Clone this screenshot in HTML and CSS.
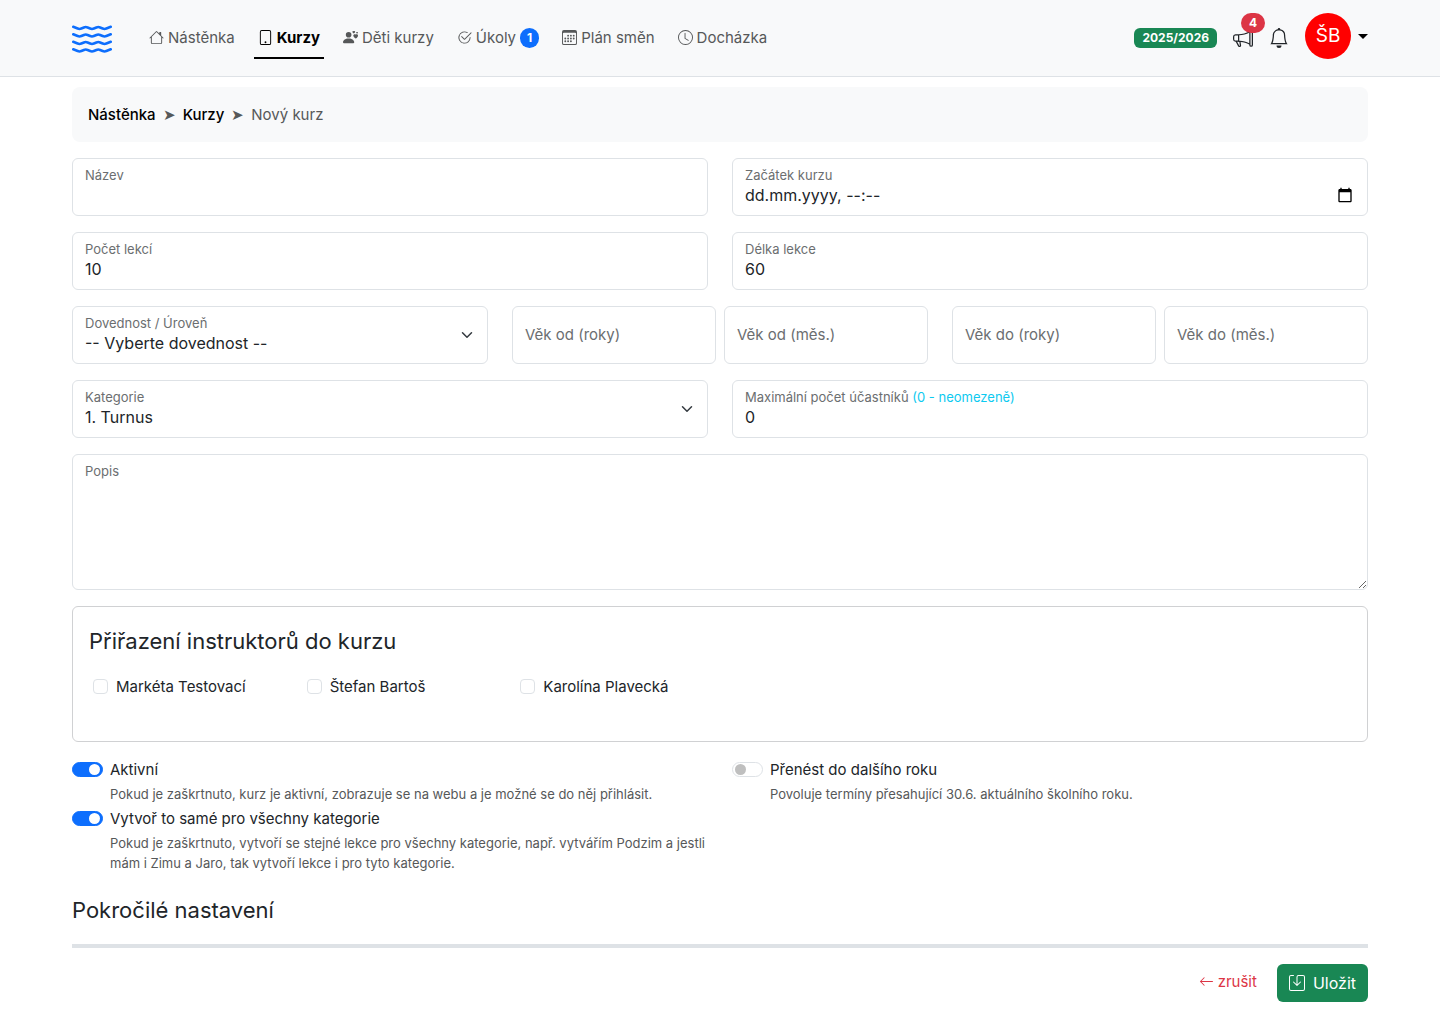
FILE: index.html
```html
<!DOCTYPE html>
<html lang="cs">
<head>
    <meta charset="UTF-8">
    <meta name="viewport" content="width=device-width, initial-scale=1.0">
    <title>Nový kurz</title>
    <link rel="stylesheet" href="styles.css">
</head>
<body>
    <header class="site-header">
        <div class="container header-inner">
            <a class="logo" href="#" aria-label="Domů">
                <svg viewBox="0 0 16 16" width="40" height="40">
                    <defs>
                        <path id="wave" d="M.036 3.314a.5.5 0 0 1 .65-.278l1.757.703a1.5 1.5 0 0 0 1.114 0l1.014-.406a2.5 2.5 0 0 1 1.857 0l1.015.406a1.5 1.5 0 0 0 1.114 0l1.014-.406a2.5 2.5 0 0 1 1.857 0l1.015.406a1.5 1.5 0 0 0 1.114 0l1.757-.703a.5.5 0 1 1 .372.928l-1.758.703a2.5 2.5 0 0 1-1.857 0l-1.014-.406a1.5 1.5 0 0 0-1.114 0l-1.015.406a2.5 2.5 0 0 1-1.857 0l-1.014-.406a1.5 1.5 0 0 0-1.114 0l-1.015.406a2.5 2.5 0 0 1-1.857 0L.314 3.964a.5.5 0 0 1-.278-.65"/>
                    </defs>
                    <use href="#wave"/>
                    <use href="#wave" y="3"/>
                    <use href="#wave" y="6"/>
                    <use href="#wave" y="9"/>
                </svg>
            </a>

            <nav class="main-nav">
                <a href="#">
                    <svg class="icon" viewBox="0 0 16 16"><path d="M8.707 1.5a1 1 0 0 0-1.414 0L.646 8.146a.5.5 0 0 0 .708.708L2 8.207V13.5A1.5 1.5 0 0 0 3.5 15h9a1.5 1.5 0 0 0 1.5-1.5V8.207l.646.647a.5.5 0 0 0 .708-.708L13 5.793V2.5a.5.5 0 0 0-.5-.5h-1a.5.5 0 0 0-.5.5v1.293zM13 7.207V13.5a.5.5 0 0 1-.5.5h-9a.5.5 0 0 1-.5-.5V7.207l5-5z"/></svg>
                    Nástěnka
                </a>
                <a href="#" class="active">
                    <svg class="icon" viewBox="0 0 16 16"><path d="M12 1a1 1 0 0 1 1 1v12a1 1 0 0 1-1 1H4a1 1 0 0 1-1-1V2a1 1 0 0 1 1-1zM4 0a2 2 0 0 0-2 2v12a2 2 0 0 0 2 2h8a2 2 0 0 0 2-2V2a2 2 0 0 0-2-2z"/><path d="M8 14a1 1 0 1 0 0-2 1 1 0 0 0 0 2"/></svg>
                    Kurzy
                </a>
                <a href="#">
                    <svg class="icon" viewBox="0 0 16 16"><path d="M11.5 1.246c.832-.855 2.913.642 0 2.566-2.913-1.924-.832-3.421 0-2.566M9 5a3 3 0 1 1-6 0 3 3 0 0 1 6 0m-9 8c0 1 1 1 1 1h10s1 0 1-1-1-4-6-4-6 3-6 4m13.5-8.09c1.387-1.425 4.855 1.07 0 4.277-4.854-3.207-1.387-5.702 0-4.276ZM15 2.165c.555-.57 1.942.428 0 1.711-1.942-1.283-.555-2.281 0-1.71Z"/></svg>
                    Děti kurzy
                </a>
                <a href="#">
                    <svg class="icon" viewBox="0 0 16 16"><path d="M2.5 8a5.5 5.5 0 0 1 8.25-4.764.5.5 0 0 0 .5-.866A6.5 6.5 0 1 0 14.5 8a.5.5 0 0 0-1 0 5.5 5.5 0 1 1-11 0"/><path d="M15.354 3.354a.5.5 0 0 0-.708-.708L8 9.293 5.354 6.646a.5.5 0 1 0-.708.708l3 3a.5.5 0 0 0 .708 0z"/></svg>
                    Úkoly
                    <span class="badge badge-blue">1</span>
                </a>
                <a href="#">
                    <svg class="icon" viewBox="0 0 16 16"><path d="M14 0H2a2 2 0 0 0-2 2v12a2 2 0 0 0 2 2h12a2 2 0 0 0 2-2V2a2 2 0 0 0-2-2M1 3.857C1 3.384 1.448 3 2 3h12c.552 0 1 .384 1 .857v10.286c0 .473-.448.857-1 .857H2c-.552 0-1-.384-1-.857z"/><path d="M6.5 7a1 1 0 1 0 0-2 1 1 0 0 0 0 2m3 0a1 1 0 1 0 0-2 1 1 0 0 0 0 2m3 0a1 1 0 1 0 0-2 1 1 0 0 0 0 2m-9 3a1 1 0 1 0 0-2 1 1 0 0 0 0 2m3 0a1 1 0 1 0 0-2 1 1 0 0 0 0 2m3 0a1 1 0 1 0 0-2 1 1 0 0 0 0 2m3 0a1 1 0 1 0 0-2 1 1 0 0 0 0 2m-9 3a1 1 0 1 0 0-2 1 1 0 0 0 0 2m3 0a1 1 0 1 0 0-2 1 1 0 0 0 0 2m3 0a1 1 0 1 0 0-2 1 1 0 0 0 0 2"/></svg>
                    Plán směn
                </a>
                <a href="#">
                    <svg class="icon" viewBox="0 0 16 16"><path d="M8 3.5a.5.5 0 0 0-1 0V9a.5.5 0 0 0 .252.434l3.5 2a.5.5 0 0 0 .496-.868L8 8.71z"/><path d="M8 16A8 8 0 1 0 8 0a8 8 0 0 0 0 16m7-8A7 7 0 1 1 1 8a7 7 0 0 1 14 0"/></svg>
                    Docházka
                </a>
            </nav>

            <div class="header-tools">
                <span class="badge badge-green">2025/2026</span>
                <a class="tool" href="#" aria-label="Oznámení">
                    <svg viewBox="0 0 16 16" width="20" height="20"><path d="M13 2.5a1.5 1.5 0 0 1 3 0v11a1.5 1.5 0 0 1-3 0v-.214c-2.162-1.241-4.49-1.843-6.912-2.083l.405 2.712A1 1 0 0 1 5.51 15.1h-.548a1 1 0 0 1-.916-.599l-1.85-3.49-.202-.003A2.014 2.014 0 0 1 0 9V7a2.02 2.02 0 0 1 1.992-2.013 75 75 0 0 0 2.483-.075c3.043-.154 6.148-.849 8.525-2.199zm1 0v11a.5.5 0 0 0 1 0v-11a.5.5 0 0 0-1 0m-1 1.35c-2.344 1.205-5.209 1.842-8 2.033v4.233q.27.015.537.036c2.568.189 5.093.744 7.463 1.993zm-9 6.215v-4.13a95 95 0 0 1-1.992.052A1.02 1.02 0 0 0 1 7v2c0 .55.448 1.002 1.006 1.009A61 61 0 0 1 4 10.065m-.657.975 1.609 3.037.01.024h.548l-.002-.014-.443-2.966a68 68 0 0 0-1.722-.082z"/></svg>
                    <span class="badge badge-red">4</span>
                </a>
                <a class="tool" href="#" aria-label="Upozornění">
                    <svg viewBox="0 0 16 16" width="20" height="20"><path d="M8 16a2 2 0 0 0 2-2H6a2 2 0 0 0 2 2M8 1.918l-.797.161A4 4 0 0 0 4 6c0 .628-.134 2.197-.459 3.742-.16.767-.376 1.566-.663 2.258h10.244c-.287-.692-.502-1.49-.663-2.258C12.134 8.197 12 6.628 12 6a4 4 0 0 0-3.203-3.92zM14.22 12c.223.447.481.801.78 1H1c.299-.199.557-.553.78-1C2.68 10.2 3 6.88 3 6c0-2.42 1.72-4.44 4.005-4.901a1 1 0 1 1 1.99 0A5 5 0 0 1 13 6c0 .88.32 4.2 1.22 6"/></svg>
                </a>
                <button type="button" class="user-menu">
                    <span class="avatar">ŠB</span>
                    <span class="caret"></span>
                </button>
            </div>
        </div>
    </header>

    <main class="container">
        <nav class="breadcrumb" aria-label="Drobečková navigace">
            <a href="#">Nástěnka</a>
            <span class="separator">➤</span>
            <a href="#">Kurzy</a>
            <span class="separator">➤</span>
            <span>Nový kurz</span>
        </nav>

        <form>
            <div class="row">
                <div class="field">
                    <input type="text" id="name">
                    <label for="name">Název</label>
                </div>
                <div class="field">
                    <input type="text" id="start" value="dd.mm.yyyy, --:--">
                    <label for="start">Začátek kurzu</label>
                    <svg class="calendar" viewBox="0 0 24 24"><path d="M20 3h-1V1h-2v2H7V1H5v2H4c-1.1 0-2 .9-2 2v16c0 1.1.9 2 2 2h16c1.1 0 2-.9 2-2V5c0-1.1-.9-2-2-2zm0 18H4V8h16z"/></svg>
                </div>
            </div>

            <div class="row">
                <div class="field">
                    <input type="text" inputmode="numeric" id="lessons" value="10">
                    <label for="lessons">Počet lekcí</label>
                </div>
                <div class="field">
                    <input type="text" inputmode="numeric" id="length" value="60">
                    <label for="length">Délka lekce</label>
                </div>
            </div>

            <div class="row row-thirds">
                <div class="field">
                    <select id="skill">
                        <option>-- Vyberte dovednost --</option>
                    </select>
                    <label for="skill">Dovednost / Úroveň</label>
                    <svg class="chevron" viewBox="0 0 16 16"><path d="m2 5 6 6 6-6"/></svg>
                </div>
                <div class="age">
                    <div class="field">
                        <input type="text" inputmode="numeric" id="from-years" placeholder=" ">
                        <label for="from-years">Věk od (roky)</label>
                    </div>
                    <div class="field">
                        <input type="text" inputmode="numeric" id="from-months" placeholder=" ">
                        <label for="from-months">Věk od (měs.)</label>
                    </div>
                </div>
                <div class="age">
                    <div class="field">
                        <input type="text" inputmode="numeric" id="to-years" placeholder=" ">
                        <label for="to-years">Věk do (roky)</label>
                    </div>
                    <div class="field">
                        <input type="text" inputmode="numeric" id="to-months" placeholder=" ">
                        <label for="to-months">Věk do (měs.)</label>
                    </div>
                </div>
            </div>

            <div class="row">
                <div class="field">
                    <select id="category">
                        <option>1. Turnus</option>
                    </select>
                    <label for="category">Kategorie</label>
                    <svg class="chevron" viewBox="0 0 16 16"><path d="m2 5 6 6 6-6"/></svg>
                </div>
                <div class="field">
                    <input type="text" inputmode="numeric" id="capacity" value="0">
                    <label for="capacity">Maximální počet účastníků <span class="hint">(0 - neomezeně)</span></label>
                </div>
            </div>

            <div class="field">
                <textarea id="description"></textarea>
                <label for="description">Popis</label>
            </div>

            <section class="panel">
                <h2>Přiřazení instruktorů do kurzu</h2>
                <div class="instructors">
                    <label><input type="checkbox"> Markéta Testovací</label>
                    <label><input type="checkbox"> Štefan Bartoš</label>
                    <label><input type="checkbox"> Karolína Plavecká</label>
                </div>
            </section>

            <div class="row">
                <div>
                    <div class="switch">
                        <input type="checkbox" id="active" checked>
                        <label for="active">Aktivní</label>
                        <p>Pokud je zaškrtnuto, kurz je aktivní, zobrazuje se na webu a je možné se do něj přihlásit.</p>
                    </div>
                    <div class="switch">
                        <input type="checkbox" id="all-categories" checked>
                        <label for="all-categories">Vytvoř to samé pro všechny kategorie</label>
                        <p>Pokud je zaškrtnuto, vytvoří se stejné lekce pro všechny kategorie, např. vytvářím Podzim a jestli mám i Zimu a Jaro, tak vytvoří lekce i pro tyto kategorie.</p>
                    </div>
                </div>
                <div class="switch">
                    <input type="checkbox" id="next-year">
                    <label for="next-year">Přenést do dalšího roku</label>
                    <p>Povoluje termíny přesahující 30.6. aktuálního školního roku.</p>
                </div>
            </div>

            <h2 class="advanced">Pokročilé nastavení</h2>

            <div class="actions">
                <a class="cancel" href="#">
                    <svg class="icon" viewBox="0 0 16 16"><path d="M15 8a.5.5 0 0 0-.5-.5H2.707l3.147-3.146a.5.5 0 1 0-.708-.708l-4 4a.5.5 0 0 0 0 .708l4 4a.5.5 0 0 0 .708-.708L2.707 8.5H14.5A.5.5 0 0 0 15 8"/></svg>
                    zrušit
                </a>
                <button type="submit" class="save">
                    <svg viewBox="0 0 16 16" width="16" height="16"><path d="M2 1a1 1 0 0 0-1 1v12a1 1 0 0 0 1 1h12a1 1 0 0 0 1-1V2a1 1 0 0 0-1-1H9.5a1 1 0 0 0-1 1v7.293l2.646-2.647a.5.5 0 0 1 .708.708l-3.5 3.5a.5.5 0 0 1-.708 0l-3.5-3.5a.5.5 0 1 1 .708-.708L7.5 9.293V2a2 2 0 0 1 2-2H14a2 2 0 0 1 2 2v12a2 2 0 0 1-2 2H2a2 2 0 0 1-2-2V2a2 2 0 0 1 2-2h2.5a.5.5 0 0 1 0 1z"/></svg>
                    Uložit
                </button>
            </div>
        </form>
    </main>
</body>
</html>
```
FILE: styles.css
```css
* {
    box-sizing: border-box;
}

body {
    margin: 0;
    font-family: Inter, "Liberation Sans", sans-serif;
    font-size: 15px;
    line-height: 23px;
    background-color: #fff;
    color: #212529;
}

a {
    color: inherit;
    text-decoration: none;
}

svg {
    display: block;
    flex: none;
    fill: currentColor;
}

input, select, textarea, button {
    font-family: inherit;
    color: inherit;
}

h2 {
    margin: 0;
    font-size: 22px;
    font-weight: 400;
    line-height: 29px;
}

.container {
    max-width: 1320px;
    margin: 0 auto;
    padding: 0 12px;
}

.icon {
    width: 15px;
    height: 15px;
}

/* Header */
.site-header {
    background-color: #f8f9fa;
    border-bottom: 1px solid #dee2e6;
}

.header-inner {
    display: flex;
    align-items: center;
    height: 76px;
}

.logo {
    color: #0d6efd;
    margin-right: 33px;
}

.main-nav {
    display: flex;
    gap: 15px;
    color: #565859;
}

.main-nav a {
    display: flex;
    align-items: center;
    gap: 4px;
    height: 41px;
    padding: 0 4px;
    border-bottom: 2px solid transparent;
}

.main-nav a:hover {
    color: #000;
}

.main-nav .active {
    color: #000;
    font-weight: 700;
    border-bottom-color: #000;
}

.badge {
    padding: 4px 7px;
    border-radius: 10px;
    font-size: 12px;
    font-weight: 700;
    line-height: 12px;
    color: #fff;
}

.badge-blue {
    margin-top: 2px;
    background-color: #0d6efd;
}

.badge-green {
    padding: 4px 8px;
    border-radius: 6px;
    background-color: #198754;
}

.badge-red {
    position: absolute;
    top: -15px;
    left: 8px;
    padding: 4px 8px;
    background-color: #dc3545;
}

.header-tools {
    display: flex;
    align-items: center;
    gap: 16px;
    margin-left: auto;
}

.tool {
    position: relative;
}

.user-menu {
    display: flex;
    align-items: center;
    gap: 7px;
    padding: 0 0 4px;
    border: none;
    background: none;
    cursor: pointer;
}

.avatar {
    width: 46px;
    height: 46px;
    border-radius: 50%;
    background-color: #f00;
    color: #fff;
    font-size: 19px;
    line-height: 46px;
    text-align: center;
}

.caret {
    border: 5px solid transparent;
    border-top-color: #000;
    border-bottom: none;
}

/* Breadcrumb */
.breadcrumb {
    display: flex;
    gap: 7px;
    margin: 10px 0 16px;
    padding: 16px;
    border-radius: 8px;
    background-color: #f8f9fa;
    color: #565859;
}

.breadcrumb a {
    color: #000;
    font-weight: 500;
}

/* Form */
.row {
    display: grid;
    grid-template-columns: 1fr 1fr;
    column-gap: 24px;
}

.row-thirds {
    grid-template-columns: 1fr 1fr 1fr;
}

.age {
    display: grid;
    grid-template-columns: 1fr 1fr;
    gap: 8px;
}

.field {
    position: relative;
    margin-bottom: 16px;
}

.field input, .field select, .field textarea {
    display: block;
    width: 100%;
    height: 58px;
    padding: 24px 12px 8px;
    border: 1px solid #dee2e6;
    border-radius: 6px;
    background-color: #fff;
    font-size: 16px;
    line-height: 24px;
    appearance: none;
}

.field textarea {
    height: 136px;
}

.field label {
    position: absolute;
    top: 7px;
    left: 13px;
    font-size: 13px;
    line-height: 20px;
    color: #6b6e70;
    pointer-events: none;
}

/* empty field, the label stands in for the value */
.field input:placeholder-shown:not(:focus) + label {
    top: 17px;
    font-size: 15px;
    line-height: 23px;
}

.hint {
    color: #0dcaf0;
}

.chevron {
    position: absolute;
    top: 23px;
    right: 13px;
    width: 12px;
    height: 12px;
    margin: 0 2px;
    fill: none;
    stroke: #343a40;
    stroke-width: 2;
    stroke-linecap: round;
    stroke-linejoin: round;
    pointer-events: none;
}

.calendar {
    position: absolute;
    top: 29px;
    right: 15px;
    width: 16px;
    height: 16px;
    color: #000;
}

/* Instructors */
.panel {
    min-height: 136px;
    margin-bottom: 16px;
    padding: 20px 16px;
    border: 1px solid #d0d1d3;
    border-radius: 6px;
}

.instructors {
    display: grid;
    grid-template-columns: repeat(6, 1fr);
    gap: 24px;
    margin: 19px 0 0 4px;
}

.instructors label {
    display: flex;
    align-items: center;
    gap: 8px;
    white-space: nowrap;
}

.instructors input {
    appearance: none;
    width: 15px;
    height: 15px;
    margin: 0;
    border: 1px solid #dee2e6;
    border-radius: 4px;
}

.instructors input:checked {
    background-color: #0d6efd;
}

/* Switches */
.switch {
    display: grid;
    grid-template-columns: 31px 1fr;
    column-gap: 7px;
    align-items: center;
    align-content: start;
    margin-bottom: 3px;
}

.switch input {
    appearance: none;
    display: flex;
    align-items: center;
    width: 31px;
    height: 15px;
    margin: 0;
    padding: 0 2px;
    border: 1px solid #dee2e6;
    border-radius: 8px;
}

.switch input::before {
    content: "";
    width: 11px;
    height: 11px;
    border-radius: 50%;
    background-color: #bfbfbf;
}

.switch input:checked {
    justify-content: flex-end;
    border-color: #0d6efd;
    background-color: #0d6efd;
}

.switch input:checked::before {
    background-color: #fff;
}

.switch p {
    grid-column: 2;
    margin: 3px 0 0;
    font-size: 13px;
    line-height: 20px;
    color: #565859;
}

.advanced {
    margin-top: 20px;
    padding-bottom: 19px;
    border-bottom: 4px solid #dee2e6;
}

.actions {
    display: flex;
    justify-content: flex-end;
    align-items: center;
    gap: 20px;
    margin: 16px 0;
}

.cancel {
    display: flex;
    align-items: center;
    gap: 4px;
    padding-bottom: 3px;
    color: #dc3545;
}

.save {
    display: flex;
    align-items: center;
    gap: 8px;
    height: 38px;
    padding: 0 12px;
    border: none;
    border-radius: 6px;
    background-color: #198754;
    color: #fff;
    font-size: 16px;
    cursor: pointer;
}
```
